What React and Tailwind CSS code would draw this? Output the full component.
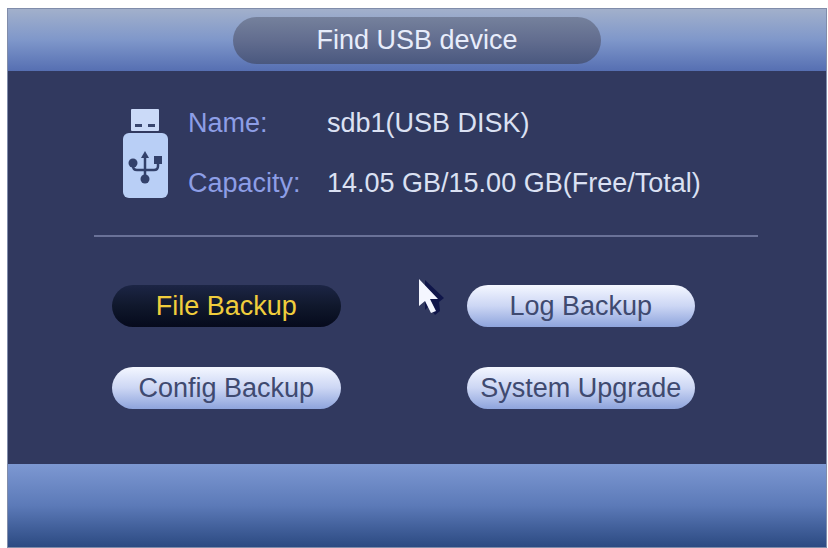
import clsx from "clsx";
import { useState } from "react";

const device = {
  name: "sdb1(USB DISK)",
  capacity: "14.05 GB/15.00 GB(Free/Total)",
};

const actions = ["File Backup", "Log Backup", "Config Backup", "System Upgrade"];

const UsbIcon = () => (
  <svg className="w-[45px] shrink-0" viewBox="0 0 45 90" aria-hidden="true">
    <rect x="8" y="1" width="28" height="22" rx="1" fill="#cbdaf8" />
    <rect x="12" y="16" width="7" height="3" fill="#39466f" />
    <rect x="25" y="16" width="7" height="3" fill="#39466f" />
    <rect x="0" y="25" width="45" height="65" rx="6" fill="#b9cff6" />
    {/* trident */}
    <g fill="none" stroke="#33416b" strokeWidth="2.5">
      <path d="M22 48v22" />
      <path d="M10 55v3q0 4 4 4h17q4 0 4-4V52" />
    </g>
    <g fill="#33416b">
      <path d="M22 43l4 7h-8z" />
      <circle cx="10" cy="55" r="4.500" />
      <rect x="31" y="48" width="8" height="8" />
      <circle cx="22" cy="71" r="4.500" />
    </g>
  </svg>
);

const Cursor = () => (
  <svg
    className="absolute -left-[50px] -top-[8px] w-[30px] h-[40px] pointer-events-none"
    viewBox="0 0 30 40"
    aria-hidden="true"
  >
    <path d="M8 3l19 18-5 4 1 9-5 4-6-9-4 4z" fill="#10164a" />
    <path d="M2 2v27l6-5 6 12 5-2-6-12h8z" fill="#f4f6ff" />
  </svg>
);

const ActionButton = ({ label, active, onClick }) => (
  <button
    type="button"
    onClick={onClick}
    aria-pressed={active}
    className={clsx(
      "w-full h-[42px] rounded-full text-[27px] leading-[42px] whitespace-nowrap",
      active
        ? "bg-linear-to-b from-[#1c2545] via-[#10182c] to-[#060a1c] text-[#f0cd3c]"
        : "bg-linear-to-b from-[#f4f7ff] via-[#ccd6f4] to-[#8ea4dc] text-[#3f4a70]"
    )}
  >
    {label}
  </button>
);

const App = () => {
  const [selected, setSelected] = useState("File Backup");

  return (
    <div className="min-h-screen flex flex-col bg-white pt-2 pl-[7px] pr-px font-['Liberation_Sans',Arial,sans-serif]">
      <main className="flex-1 flex flex-col border border-[#808caa] bg-[#31395f]">
        <header className="flex h-[62px] items-center justify-center bg-linear-to-b from-[#a2b0cb] via-[#7f97ca] to-[#566fb2]">
          <h1 className="w-[45%] h-[47px] rounded-full bg-linear-to-b from-[#75819c] via-[#626d8f] to-[#4a587f] text-center text-[27px] leading-[47px] text-[#e8edfb]">
            Find USB device
          </h1>
        </header>

        <div className="flex-1 pt-[22px] pl-[86px] pr-[68px]">
          <section className="flex items-center gap-5 pl-[29px]">
            <UsbIcon />
            <dl className="flex-1 grid grid-cols-[139px_1fr] text-[27px] leading-[60px] whitespace-nowrap">
              <dt className="text-[#8d9ee6]">Name:</dt>
              <dd className="text-[#dbe1f3]">{device.name}</dd>
              <dt className="text-[#8d9ee6]">Capacity:</dt>
              <dd className="text-[#dbe1f3]">{device.capacity}</dd>
            </dl>
          </section>

          <hr className="mt-[22px] h-[2px] border-0 bg-[#6a7298]" />

          <section className="grid grid-cols-2 gap-x-[126px] gap-y-10 mt-12 pl-[18px] pr-[63px]">
            {actions.map((label) => (
              <div key={label} className="relative">
                <ActionButton
                  label={label}
                  active={selected === label}
                  onClick={() => setSelected(label)}
                />
                {label === "Log Backup" && <Cursor />}
              </div>
            ))}
          </section>
        </div>

        <footer className="h-[83px] bg-linear-to-b from-[#7d98d2] via-[#5c7ab8] to-[#2c4a82]" />
      </main>
    </div>
  );
};

export default App;
